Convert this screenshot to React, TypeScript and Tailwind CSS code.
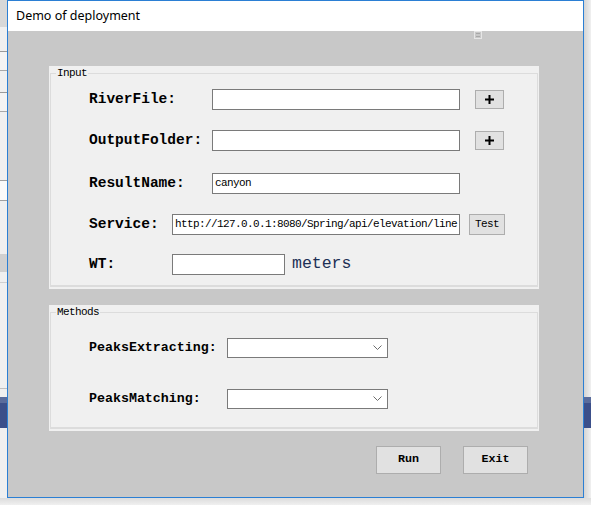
import React from 'react'

const mono = { fontFamily: '"Liberation Mono", "DejaVu Sans Mono", monospace' }

function GroupBox({ title, height, children }: { title: string; height: string; children: React.ReactNode }) {
  return (
    <div className={`relative ml-[41px] w-[490px] ${height} bg-[#f0f0f0] pt-[7px] pl-[1px] pr-[1px] pb-[2px]`}>
      <div className="h-full border border-[#dcdcdc] border-b-[2px]">{children}</div>
      <span
        className="absolute left-[7px] top-[1px] bg-[#f0f0f0] px-[1px] text-[11px] leading-[12px] tracking-[-0.6px] text-black"
        style={mono}
      >
        {title}
      </span>
    </div>
  )
}

function Label({ text, width, size = 'text-[14.5px]' }: { text: string; width: string; size?: string }) {
  return (
    <span className={`${width} shrink-0 ${size} font-bold text-black leading-none`} style={mono}>
      {text}
    </span>
  )
}

function Field({ width, value }: { width: string; value?: string }) {
  return (
    <div
      className={`${width} h-[21px] shrink-0 border border-[#7a7a7a] bg-white pl-[2px] flex items-center text-[11px] tracking-[-0.6px] text-black overflow-hidden whitespace-nowrap`}
      style={mono}
    >
      {value}
    </div>
  )
}

function SmallButton({ children, className }: { children: React.ReactNode; className: string }) {
  return (
    <div
      className={`${className} shrink-0 border border-[#adadad] bg-[#e1e1e1] flex items-center justify-center text-black`}
      style={mono}
    >
      {children}
    </div>
  )
}

function Plus() {
  return (
    <svg width="9" height="9" viewBox="0 0 9 9">
      <path d="M4.5 0v9M0 4.5h9" stroke="#000" strokeWidth="2" />
    </svg>
  )
}

function Combo() {
  return (
    <div className="w-[161px] h-[20px] shrink-0 border border-[#7a7a7a] bg-white flex items-center justify-end pr-[5px]">
      <svg width="9" height="6" viewBox="0 0 9 6">
        <path d="M0.5 0.5l4 4 4-4" fill="none" stroke="#6d6d6d" strokeWidth="1" />
      </svg>
    </div>
  )
}

export default function App() {
  return (
    <div className="w-[591px] h-[505px] bg-[#ececec] flex flex-col overflow-hidden">
      <div className="flex h-[498px]">
        {/* left part of the window behind */}
        <div className="w-[7px] flex flex-col bg-[#f0f0f0]">
          <div className="h-[27px] bg-[#d8d8d8]" />
          <div className="h-[24px]" />
          <div className="h-[1px] bg-[#9a9a9a]" />
          <div className="h-[18px] bg-[#f4f4f4]" />
          <div className="h-[1px] bg-[#a8a8a8]" />
          <div className="h-[21px]" />
          <div className="h-[1px] bg-[#9a9a9a]" />
          <div className="h-[18px] bg-[#f4f4f4]" />
          <div className="h-[1px] bg-[#a8a8a8]" />
          <div className="h-[68px]" />
          <div className="h-[1px] bg-[#a0a0a0]" />
          <div className="h-[19px] bg-[#fafafa]" />
          <div className="h-[1px] bg-[#a0a0a0]" />
          <div className="h-[53px]" />
          <div className="h-[18px] bg-[#d0d0d0]" />
          <div className="h-[10px]" />
          <div className="h-[1px] bg-[#d0d0d0]" />
          <div className="h-[105px]" />
          <div className="h-[1px] bg-[#c0c0c0]" />
          <div className="h-[8px]" />
          <div className="h-[6px] bg-[#5a6c9c]" />
          <div className="h-[25px] bg-[#3b4f8a]" />
          <div className="flex-1" />
        </div>

        {/* window */}
        <div className="w-[577px] border border-[#2b7fd4] flex flex-col bg-[#c8c8c8]">
          <div
            className="h-[30px] bg-white flex items-center pl-[8px] text-[12.5px] text-black"
            style={{ fontFamily: '"Noto Sans", "Open Sans", sans-serif' }}
          >
            Demo of deployment
          </div>
          <div className="relative flex-1 flex flex-col">
            <div className="absolute left-[466px] top-0 w-[8px] h-[8px] border border-[#e6e6e6] flex flex-col justify-between p-[1px]">
              <div className="h-[1px] bg-[#a8a8a8]" />
              <div className="h-[1px] bg-[#a8a8a8]" />
            </div>

            <div className="mt-[35px]">
              <GroupBox title="Input" height="h-[223px]">
                <div className="flex flex-col pl-[38px]">
                  <div className="mt-[15px] h-[21px] flex items-center">
                    <Label text="RiverFile:" width="w-[123px]" />
                    <Field width="w-[248px]" />
                    <SmallButton className="ml-[15px] w-[29px] h-[19px]">
                      <Plus />
                    </SmallButton>
                  </div>
                  <div className="mt-[20px] h-[21px] flex items-center">
                    <Label text="OutputFolder:" width="w-[123px]" />
                    <Field width="w-[248px]" />
                    <SmallButton className="ml-[15px] w-[29px] h-[19px]">
                      <Plus />
                    </SmallButton>
                  </div>
                  <div className="mt-[22px] h-[21px] flex items-center">
                    <Label text="ResultName:" width="w-[123px]" />
                    <Field width="w-[248px]" value="canyon" />
                  </div>
                  <div className="mt-[20px] h-[21px] flex items-center">
                    <Label text="Service:" width="w-[83px]" />
                    <Field width="w-[288px]" value="http://127.0.0.1:8080/Spring/api/elevation/line" />
                    <SmallButton className="ml-[9px] w-[36px] h-[21px] text-[11px] tracking-[-0.6px]">Test</SmallButton>
                  </div>
                  <div className="mt-[19px] h-[21px] flex items-center">
                    <Label text="WT:" width="w-[83px]" />
                    <Field width="w-[113px]" />
                    <span className="ml-[7px] text-[16.5px] leading-none text-[#1c2f55]" style={mono}>
                      meters
                    </span>
                  </div>
                </div>
              </GroupBox>
            </div>

            <div className="mt-[16px]">
              <GroupBox title="Methods" height="h-[126px]">
                <div className="flex flex-col pl-[38px]">
                  <div className="mt-[25px] h-[20px] flex items-center">
                    <Label text="PeaksExtracting:" width="w-[138px]" size="text-[13.3px]" />
                    <Combo />
                  </div>
                  <div className="mt-[31px] h-[20px] flex items-center">
                    <Label text="PeaksMatching:" width="w-[138px]" size="text-[13.3px]" />
                    <Combo />
                  </div>
                </div>
              </GroupBox>
            </div>

            <div className="mt-[15px] flex justify-end pr-[55px] gap-[22px]">
              <SmallButton className="w-[65px] h-[28px] text-[11.7px] font-bold">Run</SmallButton>
              <SmallButton className="w-[65px] h-[28px] text-[11.7px] font-bold">Exit</SmallButton>
            </div>
          </div>
        </div>

        {/* right shadow */}
        <div className="w-[7px] flex flex-col bg-gradient-to-r from-[#d4d4d4] to-[#f0f0f0]">
          <div className="h-[397px]" />
          <div className="h-[6px] bg-[#5a6c9c]" />
          <div className="h-[25px] bg-[#3b4f8a]" />
          <div className="flex-1" />
        </div>
      </div>
      <div className="h-[7px] bg-gradient-to-b from-[#dcdcdc] to-[#f0f0f0]" />
    </div>
  )
}
